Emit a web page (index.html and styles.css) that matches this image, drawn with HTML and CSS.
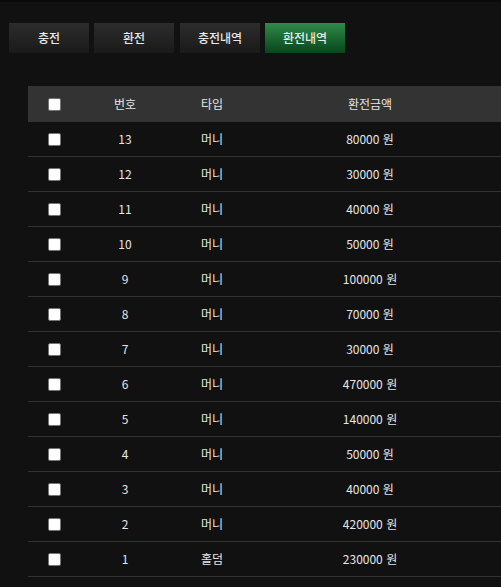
FILE: index.html
```html
<!DOCTYPE html>
<html lang="ko">
<head>
<meta charset="utf-8">
<link rel="stylesheet" href="styles.css">
</head>
<body>
<div class="topbar"></div>
<div class="page">
  <div class="tabs">
    <button class="tab">충전</button>
    <button class="tab">환전</button>
    <button class="tab">충전내역</button>
    <button class="tab active">환전내역</button>
  </div>
  <table class="list">
    <thead>
      <tr>
        <th class="c-chk"><span class="chk"></span></th>
        <th class="c-no">번호</th>
        <th class="c-type">타입</th>
        <th class="c-amt">환전금액</th>
        <th class="c-rest"></th>
      </tr>
    </thead>
    <tbody>
      <tr><td><span class="chk"></span></td><td>13</td><td>머니</td><td>80000 원</td><td></td></tr>
      <tr><td><span class="chk"></span></td><td>12</td><td>머니</td><td>30000 원</td><td></td></tr>
      <tr><td><span class="chk"></span></td><td>11</td><td>머니</td><td>40000 원</td><td></td></tr>
      <tr><td><span class="chk"></span></td><td>10</td><td>머니</td><td>50000 원</td><td></td></tr>
      <tr><td><span class="chk"></span></td><td>9</td><td>머니</td><td>100000 원</td><td></td></tr>
      <tr><td><span class="chk"></span></td><td>8</td><td>머니</td><td>70000 원</td><td></td></tr>
      <tr><td><span class="chk"></span></td><td>7</td><td>머니</td><td>30000 원</td><td></td></tr>
      <tr><td><span class="chk"></span></td><td>6</td><td>머니</td><td>470000 원</td><td></td></tr>
      <tr><td><span class="chk"></span></td><td>5</td><td>머니</td><td>140000 원</td><td></td></tr>
      <tr><td><span class="chk"></span></td><td>4</td><td>머니</td><td>50000 원</td><td></td></tr>
      <tr><td><span class="chk"></span></td><td>3</td><td>머니</td><td>40000 원</td><td></td></tr>
      <tr><td><span class="chk"></span></td><td>2</td><td>머니</td><td>420000 원</td><td></td></tr>
      <tr><td><span class="chk"></span></td><td>1</td><td>홀덤</td><td>230000 원</td><td></td></tr>
    </tbody>
  </table>
</div>
</body>
</html>
```
FILE: styles.css
```css
html, body {
  margin: 0;
  padding: 0;
  background: #111111;
  color: #e6e6e6;
  font-family: "Noto Sans CJK KR", "Noto Sans", sans-serif;
  font-size: 12px;
  overflow: hidden;
}
.topbar {
  height: 2px;
  background: #0a0a0a;
}
.page {
  padding: 21px 0 0 9px;
}
.tabs {
  display: flex;
  gap: 5px;
}
.tab {
  width: 80px;
  height: 30px;
  border: 0;
  padding: 0 0 1px 0;
  margin: 0;
  background: linear-gradient(#2c2c2c, #1a1a1a);
  color: #e8e8e8;
  font-family: inherit;
  font-size: 12px;
  font-weight: 500;
}
.tab:nth-child(3) { margin-left: 1px; }
.tab.active {
  background: linear-gradient(#2f8a4a, #07461c);
  color: #eaeaea;
}
.list {
  margin: 33px 0 0 19px;
  border-collapse: collapse;
  width: 473px;
  table-layout: fixed;
}
.list th {
  background: #333333;
  height: 34px;
  padding: 0 0 2px 0;
  font-weight: normal;
  text-align: center;
  color: #e6e6e6;
}
.list td {
  height: 32px;
  padding: 0 0 2px 0;
  text-align: center;
  border-bottom: 1px solid #333333;
  color: #e6e6e6;
}
.c-chk { width: 52px; }
.c-no { width: 90px; }
.c-type { width: 84px; }
.c-amt { width: 232px; }
.chk {
  display: inline-block;
  width: 11px;
  height: 11px;
  background: #ffffff;
  border: 1px solid #767676;
  border-radius: 2px;
  vertical-align: middle;
  margin-bottom: 1px;
}
```
